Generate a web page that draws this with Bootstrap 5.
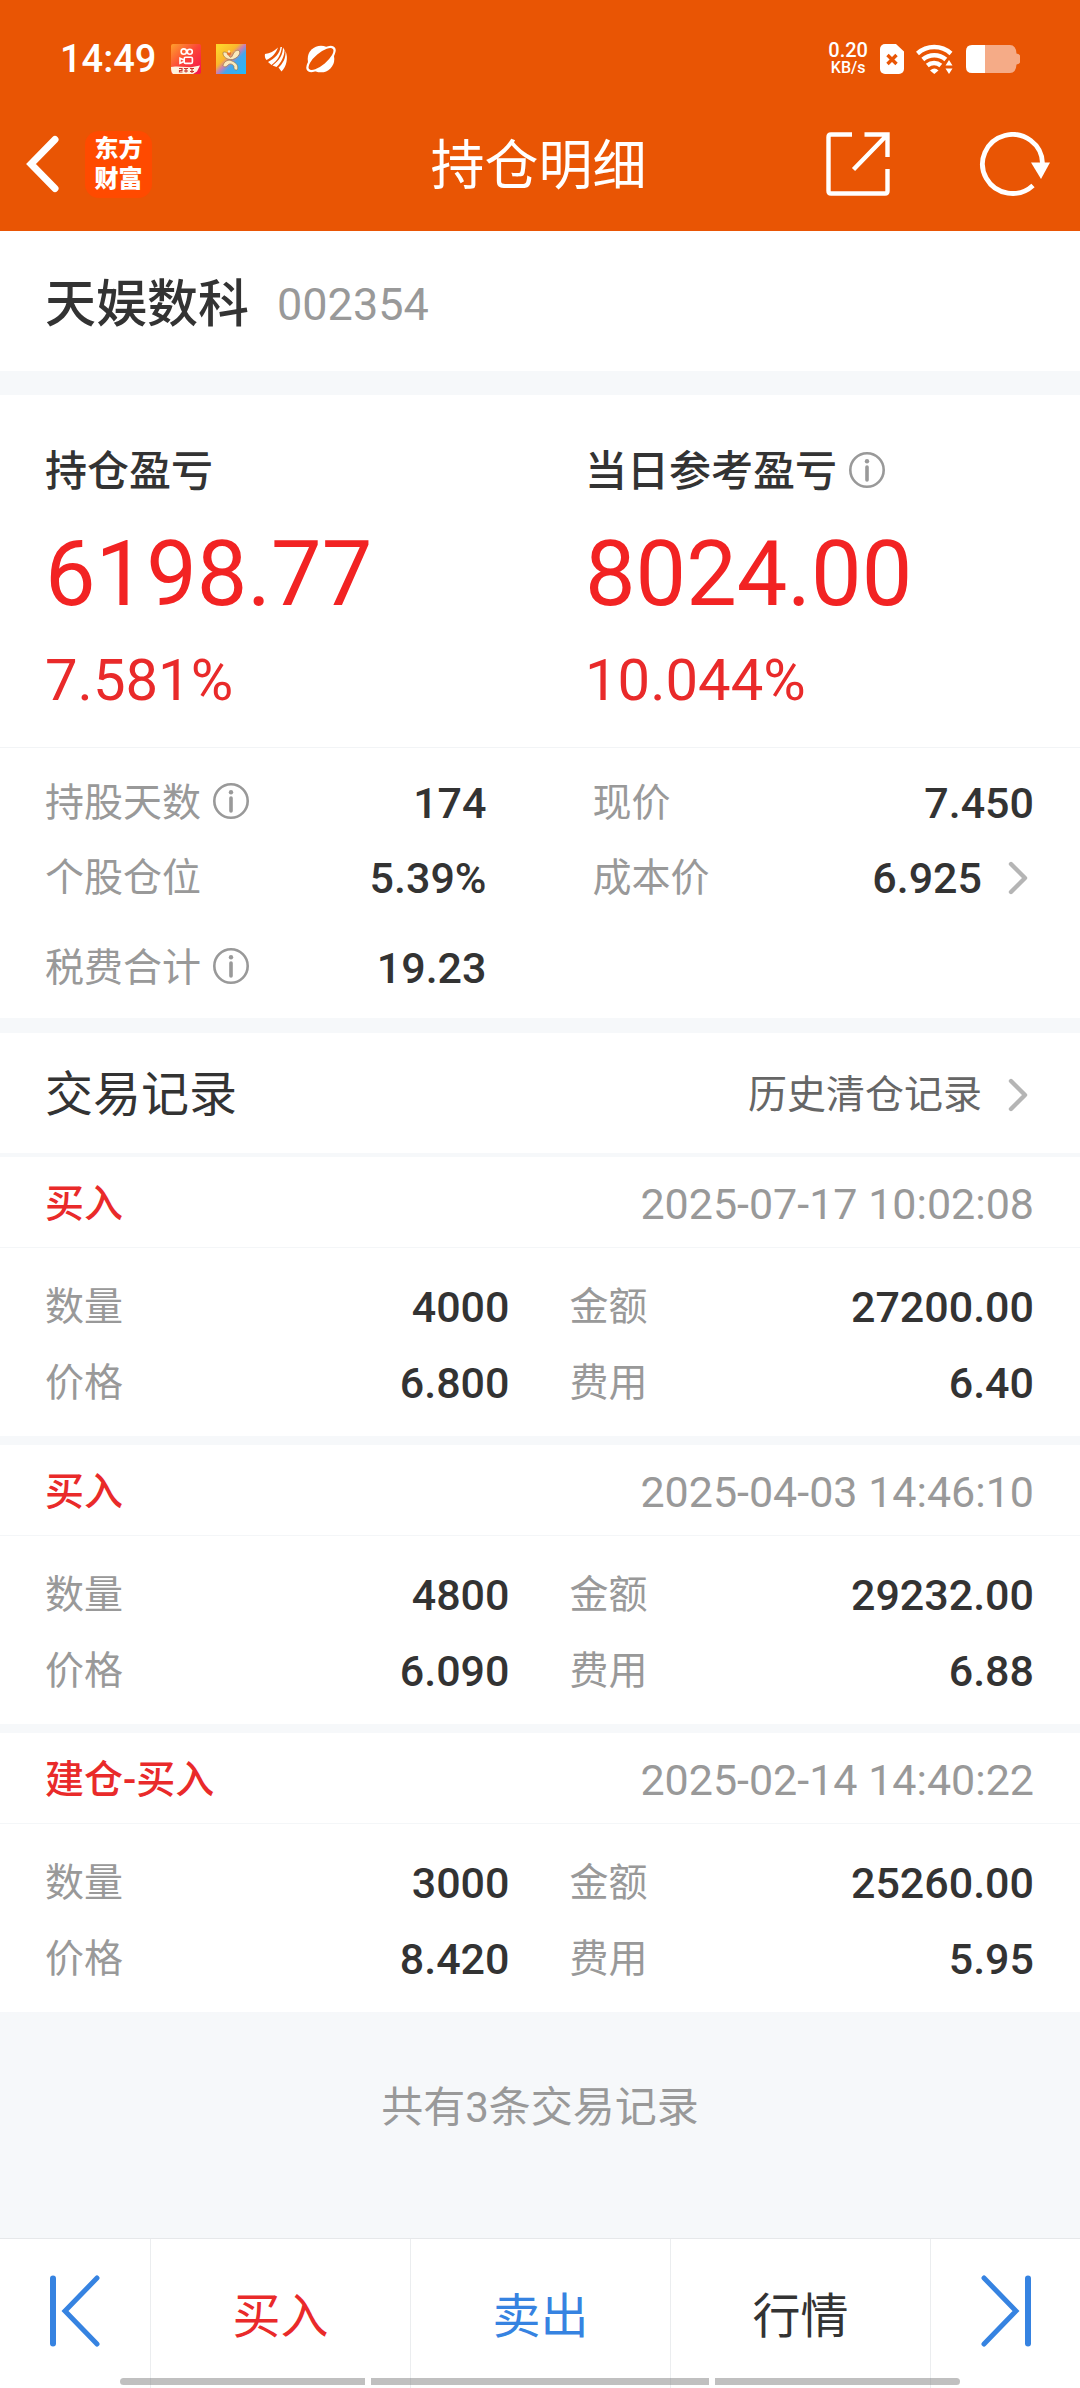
<!DOCTYPE html>
<html lang="zh-CN">
<head>
<meta charset="utf-8">
<meta name="viewport" content="width=device-width, initial-scale=1">
<title>持仓明细</title>
<link href="https://cdn.jsdelivr.net/npm/bootstrap@5.3.0/dist/css/bootstrap.min.css" rel="stylesheet">
<style>
:root { --brand:#e95504; --ink:#333; --muted:#999; --rise:#e92a2a; --band:#f6f8fa; --blue:#3683e1; }
body { font-family: Roboto, "Noto Sans CJK SC", sans-serif; color: var(--ink); background: var(--band); font-size: 43px; line-height: 60px; }
svg { display: block; flex: none; }
.gutter { padding-left: 45px; padding-right: 46px; }
.app-head { background: var(--brand); color: #fff; }
.status-bar { height: 100px; padding: 18px 60px 0; }
.clock { font-size: 38px; font-weight: 500; }
.status-apps { gap: 15px; margin-left: 15px; }
.net-speed { font-size: 20px; line-height: 17px; font-weight: 500; }
.net-unit { font-size: 16px; }
.title-bar { height: 131px; padding: 0 28px 3px 25px; }
.title-side { flex: 1 1 0; }
.title-text { font-size: 54px; line-height: 64px; font-weight: 400; padding-top: 6px; }
.icon-btn { border: 0; background: none; padding: 0; color: inherit; }
.share-btn { margin-right: 88px; }
.brand-tile { flex: none; width: 67px; height: 67px; border-radius: 14px; background: #ff4a00; font-size: 24px; line-height: 30px; font-weight: 900; color: #fff; }
.stock-bar { padding-top: 44px; padding-bottom: 36px; margin-bottom: 24px; }
.stock-name { font-size: 51px; font-weight: 500; line-height: 60px; }
.stock-code { font-size: 45px; color: var(--muted); }
.profit { padding-top: 47px; padding-bottom: 35px; border-bottom: 1px solid #f2f4f6; }
.profit-title { font-size: 42px; font-weight: 500; line-height: 60px; }
.profit-sum { font-size: 90px; line-height: 146px; color: #f22323; }
.profit-rate { font-size: 58px; line-height: 64px; color: var(--rise); }
.lbl { font-size: 39px; color: var(--muted); font-weight: 400; }
.val { font-weight: 500; }
.detail { padding-top: 17px; padding-bottom: 13px; margin-bottom: 15px; column-gap: 106px; }
.detail-row { height: 75px; }
.detail-last { height: 90px; padding-top: 15px; }
.pair-grid { display: grid; grid-template-columns: 1fr 1fr; }
.gap-info { gap: 12px; }
.gap-info svg { margin-bottom: 4px; }
.gap-more { gap: 26px; padding-right: 6px; }
.rec-head { height: 120px; margin-bottom: 4px; padding-top: 4px; }
.rec-title { font-size: 48px; font-weight: 400; line-height: 60px; }
.rec-more { font-size: 39px; color: #666; text-decoration: none; }
.trade { margin-bottom: 9px; }
.trade-head { height: 91px; border-bottom: 1px solid #f4f6f8; padding-top: 4px; }
.trade-kind { font-size: 39px; font-weight: 500; color: var(--rise); }
.trade-time { color: var(--muted); }
.trade-body { padding-top: 21px; padding-bottom: 15px; column-gap: 60px; }
.trade-row { height: 76px; }
.total-note { font-size: 42px; color: var(--muted); padding-top: 57px; }
.foot { height: 150px; border-top: 1px solid #e6e8ea; }
.foot-side { flex: 0 0 150px; }
.foot-btn { border: 0; background: none; font-size: 48px; padding: 7px 0 0; }
.foot > * + * { border-left: 1px solid #ebedef; }
.foot-icon { padding-bottom: 5px; }
.blue { color: var(--blue); }
.rise { color: var(--rise); }
.sys-bar { bottom: 3px; left: 120px; right: 120px; gap: 6px; border-radius: 4px; overflow: hidden; }
.foot > .sys-bar { border-left: 0; }
.sys-bar i { height: 7px; flex: 245 1 0; background: rgba(130,130,130,.5); }
.sys-bar .mid { flex-grow: 338; }
</style>
</head>
<body class="d-flex flex-column min-vh-100">

<svg width="0" height="0" class="position-absolute" aria-hidden="true">
  <symbol id="info" viewBox="0 0 36 36"><circle cx="18" cy="18" r="16.7" fill="none" stroke="#999" stroke-width="2.6"/><circle cx="18" cy="9.2" r="2.2" fill="#999"/><path d="M18 15v13" stroke="#999" stroke-width="3.6" stroke-linecap="round"/></symbol>
  <symbol id="more" viewBox="0 0 20 34"><path d="M3 3l14 14L3 31" fill="none" stroke="#b5b5b5" stroke-width="4.4" stroke-linecap="round" stroke-linejoin="round"/></symbol>
</svg>

<header class="app-head">
  <div class="status-bar d-flex align-items-center justify-content-between">
    <div class="d-flex align-items-center">
      <span class="clock">14:49</span>
      <div class="status-apps d-flex align-items-center">
        <svg width="30" height="30" viewBox="0 0 30 30">
          <defs><linearGradient id="ga" x1="0" y1="0" x2="1" y2="1"><stop offset="0" stop-color="#ffa02c"/><stop offset=".5" stop-color="#fb4438"/><stop offset="1" stop-color="#f5114e"/></linearGradient></defs>
          <rect width="30" height="30" rx="2" fill="url(#ga)"/>
          <g fill="none" stroke="#fff" stroke-width="1.6"><circle cx="12.8" cy="7.6" r="2.7"/><circle cx="18.800" cy="7.800" r="2.500"/><rect x="13.200" y="13.200" width="8.200" height="6.200" rx="1.400"/><path d="M13 16l-4-1.800v5l4-1.800"/></g>
          <path d="M0 23q2-.6 6-.4l14 .6 9-1.600-3 6-4 2.400H2q-2-1.500-2-7z" fill="#fff3df"/>
          <path d="M8 24.500h3v2H8.500v1.500h3M13 24.500h4M15 24.500v4M13 27h4M19 24.500h4M21 24v5M19 27.500h4" stroke="#c9362f" stroke-width="1.200" fill="none"/>
        </svg>
        <svg width="30" height="30" viewBox="0 0 30 30">
          <defs><linearGradient id="gb" x1="0" y1="0" x2="1" y2="1"><stop offset=".1" stop-color="#fdd42b"/><stop offset=".38" stop-color="#fbb62f"/><stop offset=".5" stop-color="#c97fb4"/><stop offset=".62" stop-color="#46a6ec"/><stop offset="1" stop-color="#25b9f5"/></linearGradient></defs>
          <rect width="30" height="30" fill="url(#gb)"/>
          <g fill="#fbe9bd" stroke="#8d6b38" stroke-width=".6"><path d="M7 8.500c2.500-1.500 5 1 6.500 4 1.500 2 2.500 0 3.500-2 1.500-4 5-5 6.500-3.500 1 3.500-2 7-7 8.500-5 .5-10-2.500-9.500-7z"/><path d="M7 21.500c1-4.500 6-6.500 9-4.500 5 2 6.500 5 5.500 8.500-2 1.500-4-.5-3.500-3-1-2.500-4-3.500-6-1.500-1.500 2-4 2.500-5 .5z"/></g>
          <circle cx="13" cy="9.500" r="2" fill="#e8722c"/><circle cx="13" cy="7.500" r="1.200" fill="#fbe9bd"/>
        </svg>
        <svg width="30" height="30" viewBox="0 0 30 30" fill="#fff">
          <path d="M4 10C9 9.500 13 7 17 3.500 15 9 11 13.500 5.500 16 4 14.500 3.500 12 4 10z"/>
          <path d="M19.500 3C19 9 14 14.500 7 18l3.500 3C16.500 17 20 10 21 3z"/>
          <path d="M22 3.500c0 7-3.500 13-10.500 18l4 1.500c5-4.500 8-11 8-17z"/>
          <path d="M24.500 7c.5 7-2.500 12.500-7 16.500l3 4C25.500 22.500 27.500 14 24.500 7z"/>
        </svg>
        <svg width="30" height="30" viewBox="0 0 30 30">
          <g transform="rotate(-40 15 15)"><ellipse cx="15" cy="15" rx="18" ry="8" fill="#fff"/></g>
          <circle cx="15" cy="15" r="13.300" fill="#fff"/>
          <g transform="rotate(-40 15 15)"><ellipse cx="15" cy="15" rx="15.500" ry="5.800" fill="#e95504"/></g>
        </svg>
      </div>
    </div>
    <div class="d-flex align-items-center gap-2">
      <div class="net-speed text-center me-1">0.20<div class="net-unit">KB/s</div></div>
      <svg class="me-1" width="24" height="30" viewBox="0 0 24 30"><path d="M5 0h11l8 7.500V25a5 5 0 0 1-5 5H5a5 5 0 0 1-5-5V5a5 5 0 0 1 5-5z" fill="#fff"/><path d="M7.500 11l9 9M16.500 11l-9 9" stroke="#e95504" stroke-width="3.400"/></svg>
      <svg class="me-1" width="38" height="30" viewBox="0 0 38 30"><g fill="none" stroke="#fff" stroke-width="4.400"><path d="M1.500 9.500a25 25 0 0 1 33.500 0"/><path d="M6.800 15.500a17.500 17.500 0 0 1 23 0"/><path d="M11.300 21.500a10.500 10.500 0 0 1 13.500 0"/></g><path d="M14 26.500q4.500-4 8.500 0L18.300 30z" fill="#fff"/><path d="M33 14l5.500 14h-11z" fill="#e95504"/><path d="M33 16l3.500 5.500h-7zM33 30l3.500-5.500h-7z" fill="#fff"/></svg>
      <svg width="54" height="28" viewBox="0 0 54 28"><path d="M19 0h25q6 0 6.500 8.500 3 .5 3.500 2v7q-.5 1.500-3.500 2Q50 28 44 28H19z" fill="#f5ab87"/><path d="M19 0v28H6q-6 0-6-6V6q0-6 6-6z" fill="#fff"/></svg>
    </div>
  </div>
  <nav class="title-bar d-flex align-items-center" aria-label="页面导航">
    <div class="title-side d-flex align-items-center">
      <button class="icon-btn" type="button" aria-label="返回"><svg width="36" height="58" viewBox="0 0 36 58"><path d="M30 4.500L6 29 30 53.500" fill="none" stroke="#fff" stroke-width="7" stroke-linecap="round" stroke-linejoin="miter"/></svg></button>
      <a class="brand-tile text-decoration-none d-flex align-items-center justify-content-center text-center ms-4" href="#">东方<br>财富</a>
    </div>
    <h1 class="title-text m-0">持仓明细</h1>
    <div class="title-side d-flex align-items-center justify-content-end">
      <button class="icon-btn share-btn" type="button" aria-label="分享"><svg width="64" height="64" viewBox="0 0 64 64" fill="none" stroke="#fff" stroke-width="4.400"><path d="M26 2.500H5q-2.500 0-2.500 2.500v54q0 2.500 2.500 2.500h54q2.500 0 2.500-2.500V37M38.500 2.500h23V25M61 3L27.500 37.500"/></svg></button>
      <button class="icon-btn" type="button" aria-label="刷新"><svg width="74" height="64" viewBox="0 0 74 64"><path d="M64.500 31.500A30 29.500 0 1 0 55 53.500" fill="none" stroke="#fff" stroke-width="4.800"/><path d="M53 30.500h19L63 47z" fill="#fff"/></svg></button>
    </div>
  </nav>
</header>

<main class="flex-grow-1">
  <section class="stock-bar gutter bg-white d-flex align-items-center">
    <h2 class="stock-name m-0">天娱数科</h2>
    <span class="stock-code ms-4 ps-1">002354</span>
  </section>

  <section class="profit bg-white row g-0">
    <div class="col-6 gutter">
      <div class="profit-title">持仓盈亏</div>
      <div class="profit-sum">6198.77</div>
      <div class="profit-rate">7.581%</div>
    </div>
    <div class="col-6 gutter">
      <div class="profit-title d-flex align-items-center gap-info">当日参考盈亏<svg width="36" height="36"><use href="#info"/></svg></div>
      <div class="profit-sum">8024.00</div>
      <div class="profit-rate">10.044%</div>
    </div>
  </section>

  <section class="detail gutter bg-white pair-grid">
    <div class="detail-row d-flex align-items-center justify-content-between"><span class="lbl d-flex align-items-center gap-info">持股天数<svg width="36" height="36"><use href="#info"/></svg></span><span class="val">174</span></div>
    <div class="detail-row d-flex align-items-center justify-content-between"><span class="lbl">现价</span><span class="val">7.450</span></div>
    <div class="detail-row d-flex align-items-center justify-content-between"><span class="lbl">个股仓位</span><span class="val">5.39%</span></div>
    <div class="detail-row d-flex align-items-center justify-content-between"><span class="lbl">成本价</span><span class="val d-flex align-items-center gap-more">6.925<svg width="20" height="34"><use href="#more"/></svg></span></div>
    <div class="detail-last d-flex align-items-center justify-content-between"><span class="lbl d-flex align-items-center gap-info">税费合计<svg width="36" height="36"><use href="#info"/></svg></span><span class="val">19.23</span></div>
  </section>

  <section>
    <div class="rec-head gutter bg-white d-flex align-items-center justify-content-between">
      <h2 class="rec-title m-0">交易记录</h2>
      <a class="rec-more d-flex align-items-center gap-more" href="#">历史清仓记录<svg width="20" height="34"><use href="#more"/></svg></a>
    </div>

    <article class="trade bg-white">
      <div class="trade-head gutter d-flex align-items-center justify-content-between"><span class="trade-kind">买入</span><time class="trade-time">2025-07-17 10:02:08</time></div>
      <div class="trade-body gutter pair-grid">
        <div class="trade-row d-flex align-items-center justify-content-between"><span class="lbl">数量</span><span class="val">4000</span></div>
        <div class="trade-row d-flex align-items-center justify-content-between"><span class="lbl">金额</span><span class="val">27200.00</span></div>
        <div class="trade-row d-flex align-items-center justify-content-between"><span class="lbl">价格</span><span class="val">6.800</span></div>
        <div class="trade-row d-flex align-items-center justify-content-between"><span class="lbl">费用</span><span class="val">6.40</span></div>
      </div>
    </article>

    <article class="trade bg-white">
      <div class="trade-head gutter d-flex align-items-center justify-content-between"><span class="trade-kind">买入</span><time class="trade-time">2025-04-03 14:46:10</time></div>
      <div class="trade-body gutter pair-grid">
        <div class="trade-row d-flex align-items-center justify-content-between"><span class="lbl">数量</span><span class="val">4800</span></div>
        <div class="trade-row d-flex align-items-center justify-content-between"><span class="lbl">金额</span><span class="val">29232.00</span></div>
        <div class="trade-row d-flex align-items-center justify-content-between"><span class="lbl">价格</span><span class="val">6.090</span></div>
        <div class="trade-row d-flex align-items-center justify-content-between"><span class="lbl">费用</span><span class="val">6.88</span></div>
      </div>
    </article>

    <article class="trade bg-white">
      <div class="trade-head gutter d-flex align-items-center justify-content-between"><span class="trade-kind">建仓-买入</span><time class="trade-time">2025-02-14 14:40:22</time></div>
      <div class="trade-body gutter pair-grid">
        <div class="trade-row d-flex align-items-center justify-content-between"><span class="lbl">数量</span><span class="val">3000</span></div>
        <div class="trade-row d-flex align-items-center justify-content-between"><span class="lbl">金额</span><span class="val">25260.00</span></div>
        <div class="trade-row d-flex align-items-center justify-content-between"><span class="lbl">价格</span><span class="val">8.420</span></div>
        <div class="trade-row d-flex align-items-center justify-content-between"><span class="lbl">费用</span><span class="val">5.95</span></div>
      </div>
    </article>

    <p class="total-note text-center mb-0">共有3条交易记录</p>
  </section>
</main>

<footer class="foot bg-white d-flex position-relative">
  <button class="foot-side foot-icon icon-btn d-flex align-items-center justify-content-center blue" type="button" aria-label="上一个"><svg width="50" height="72" viewBox="0 0 50 72" fill="none" stroke="currentColor" stroke-linecap="round"><path d="M3 3.500v65" stroke-width="6"/><path d="M47 3L15 36l32 33" stroke-width="5"/></svg></button>
  <button class="foot-btn flex-fill rise" type="button">买入</button>
  <button class="foot-btn flex-fill blue" type="button">卖出</button>
  <button class="foot-btn flex-fill text-reset" type="button">行情</button>
  <button class="foot-side foot-icon icon-btn d-flex align-items-center justify-content-center blue" type="button" aria-label="下一个"><svg width="50" height="72" viewBox="0 0 50 72" fill="none" stroke="currentColor" stroke-linecap="round"><path d="M47 3.500v65" stroke-width="6"/><path d="M3 3L35 36 3 69" stroke-width="5"/></svg></button>
  <div class="sys-bar position-absolute d-flex" aria-hidden="true"><i></i><i class="mid"></i><i></i></div>
</footer>

<script src="https://cdn.jsdelivr.net/npm/bootstrap@5.3.0/dist/js/bootstrap.bundle.min.js"></script>
</body>
</html>
